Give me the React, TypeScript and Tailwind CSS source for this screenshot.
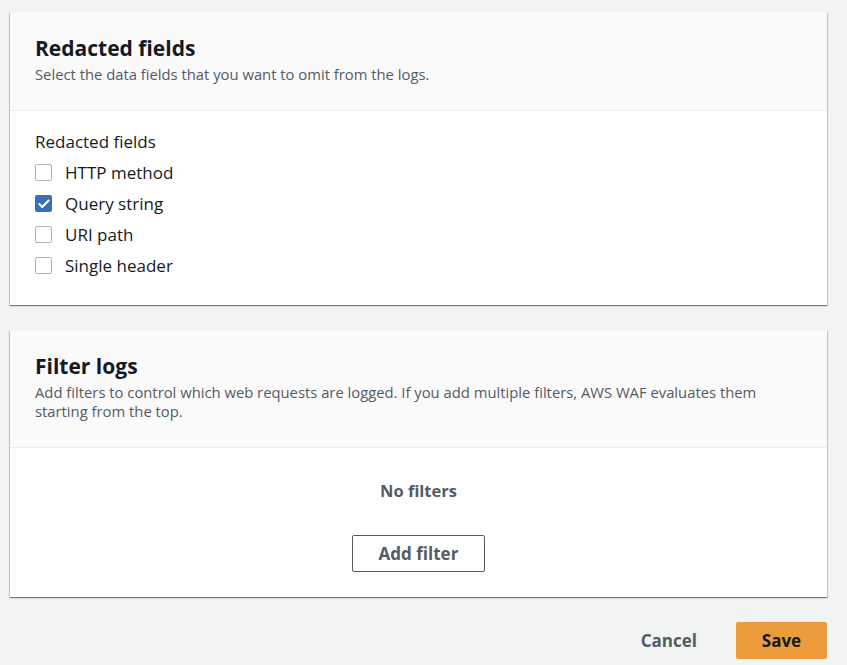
import { Check } from "lucide-react"

const fields = [
  { label: "HTTP method", checked: false },
  { label: "Query string", checked: true },
  { label: "URI path", checked: false },
  { label: "Single header", checked: false },
]

const cardShadow =
  "shadow-[0_1px_1px_0_rgba(0,28,36,0.35),1px_1px_1px_0_rgba(0,28,36,0.15),-1px_1px_1px_0_rgba(0,28,36,0.15)]"

function CardHeader({ title, children }: { title: string; children: React.ReactNode }) {
  return (
    <div className="bg-[#fafafa] border-b border-[#eaeded] px-[25px] pt-[22px] pb-[26px]">
      <h2 className="text-[21px] leading-[28px] font-bold text-[#16191f]">{title}</h2>
      <p className="mt-[3px] text-[14.8px] leading-[19px] text-[#545b64]">{children}</p>
    </div>
  )
}

export default function App() {
  return (
    <div
      className="min-h-screen bg-[#f2f3f3] pl-[10px] pr-[20px] pt-[12px] pb-4 w-[847px]"
      style={{ fontFamily: '"Open Sans", "Noto Sans", sans-serif' }}
    >
      <section className={`bg-white ${cardShadow}`}>
        <CardHeader title="Redacted fields">
          Select the data fields that you want to omit from the logs.
        </CardHeader>
        <div className="px-[25px] pt-[20px] pb-[24px]">
          <div className="text-[17px] leading-[22px] text-[#16191f]">Redacted fields</div>
          <div className="mt-[4px] flex flex-col">
            {fields.map((f) => (
              <label key={f.label} className="flex items-center h-[31px] gap-[13px]">
                {f.checked ? (
                  <span className="w-[17px] h-[17px] rounded-[2px] bg-[#3b6eb5] flex items-center justify-center">
                    <Check className="w-[14px] h-[14px] text-white" strokeWidth={3.5} />
                  </span>
                ) : (
                  <span className="w-[17px] h-[17px] rounded-[2px] border border-[#aab7b8] bg-white" />
                )}
                <span className="text-[17px] text-[#16191f]">{f.label}</span>
              </label>
            ))}
          </div>
        </div>
      </section>

      <section className={`mt-[25px] bg-white ${cardShadow}`}>
        <CardHeader title="Filter logs">
          Add filters to control which web requests are logged. If you add multiple filters, AWS WAF evaluates them
          starting from the top.
        </CardHeader>
        <div className="flex flex-col items-center pt-[32px] pb-[25px]">
          <div className="text-[16.5px] leading-[22px] font-bold text-[#545b64]">No filters</div>
          <button className="mt-[33px] w-[133px] h-[37px] border border-[#545b64] rounded-[2px] bg-white text-[17px] font-bold text-[#545b64]">
            Add filter
          </button>
        </div>
      </section>

      <div className="mt-[25px] flex justify-end items-center gap-[39px]">
        <button className="text-[17px] font-bold text-[#545b64]">Cancel</button>
        <button className="w-[91px] h-[37px] rounded-[2px] bg-[#ec9c3c] text-[17px] font-bold text-[#16191f]">
          Save
        </button>
      </div>
    </div>
  )
}
